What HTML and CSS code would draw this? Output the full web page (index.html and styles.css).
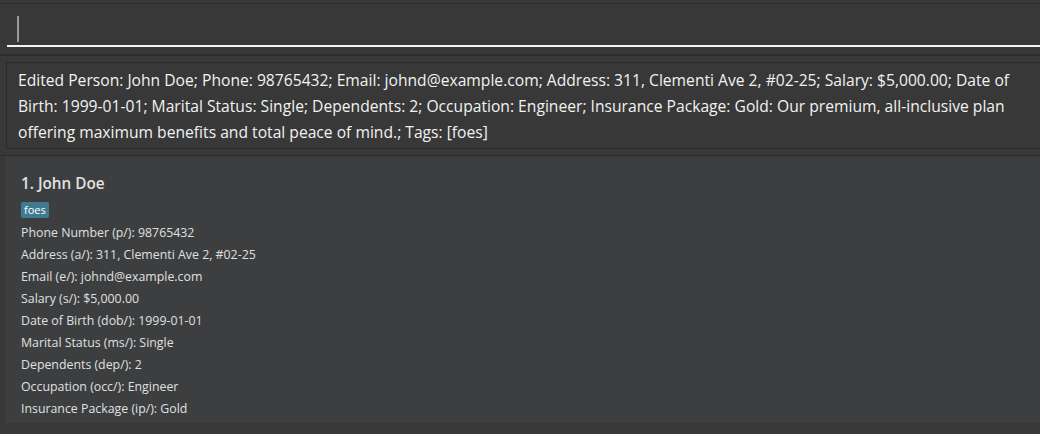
FILE: index.html
```html
<!DOCTYPE html>
<html>
<head>
<meta charset="utf-8">
<link rel="stylesheet" href="styles.css">
</head>
<body>
<div class="app">
  <div class="top-strip"></div>
  <div class="command-section">
    <div class="command-box"><span class="caret"></span></div>
  </div>
  <div class="result-section">
    <div class="result-box">
      <p class="result-text">Edited Person: John Doe; Phone: 98765432; Email: johnd@example.com; Address: 311, Clementi Ave 2, #02-25; Salary: $5,000.00; Date of<br>Birth: 1999-01-01; Marital Status: Single; Dependents: 2; Occupation: Engineer; Insurance Package: Gold: Our premium, all-inclusive plan<br>offering maximum benefits and total peace of mind.; Tags: [foes]</p>
    </div>
  </div>
  <div class="list-section">
    <div class="card">
      <div class="card-name">1. John Doe</div>
      <div class="tags"><span class="tag">foes</span></div>
      <div class="field">Phone Number (p/): 98765432</div>
      <div class="field">Address (a/): 311, Clementi Ave 2, #02-25</div>
      <div class="field">Email (e/): johnd@example.com</div>
      <div class="field">Salary (s/): $5,000.00</div>
      <div class="field">Date of Birth (dob/): 1999-01-01</div>
      <div class="field">Marital Status (ms/): Single</div>
      <div class="field">Dependents (dep/): 2</div>
      <div class="field">Occupation (occ/): Engineer</div>
      <div class="field">Insurance Package (ip/): Gold</div>
    </div>
  </div>
</div>
</body>
</html>
```
FILE: styles.css
```css
html, body {
  margin: 0;
  padding: 0;
  background: #383838;
  overflow: hidden;
}
body {
  width: 1040px;
  height: 434px;
  font-family: "Open Sans", "Noto Sans", sans-serif;
}
.app {
  display: flex;
  flex-direction: column;
}
.top-strip {
  height: 3px;
  border-bottom: 1px solid #2e2e2e;
}
.command-section {
  height: 50px;
  padding-left: 7px;
  border-bottom: 2px solid #2e2e2e;
  display: flex;
}
.command-box {
  flex: 1;
  height: 43px;
  border-bottom: 2px solid #f4f4f4;
  padding-left: 10px;
  padding-top: 12px;
  box-sizing: border-box;
}
.caret {
  display: block;
  width: 2px;
  height: 26px;
  background: #9a9a9a;
}
.result-section {
  padding: 6px 0 6px 6px;
  border-bottom: 1px solid #2e2e2e;
}
.result-box {
  border: 1px solid #2a2a2a;
  border-right: none;
  padding: 4px 0 3px 11px;
}
.result-text {
  margin: 0;
  color: #f2f2f2;
  font-size: 15.65px;
  line-height: 26px;
  white-space: nowrap;
  font-weight: 400;
}
.list-section {
  padding: 1px 0 0 6px;
}
.card {
  background: #3c3e3f;
  padding: 15px 0 3px 15px;
}
.card-name {
  color: #e2e2e2;
  font-size: 15.3px;
  font-weight: 600;
  line-height: 22px;
}
.tags {
  display: flex;
  margin-top: 8px;
  margin-bottom: 4px;
}
.tag {
  background: #3e7b91;
  color: #ffffff;
  font-size: 11px;
  line-height: 16px;
  padding: 0 3px;
  border-radius: 2px;
}
.field {
  color: #e0e0e0;
  font-size: 12.35px;
  line-height: 22px;
}
```
